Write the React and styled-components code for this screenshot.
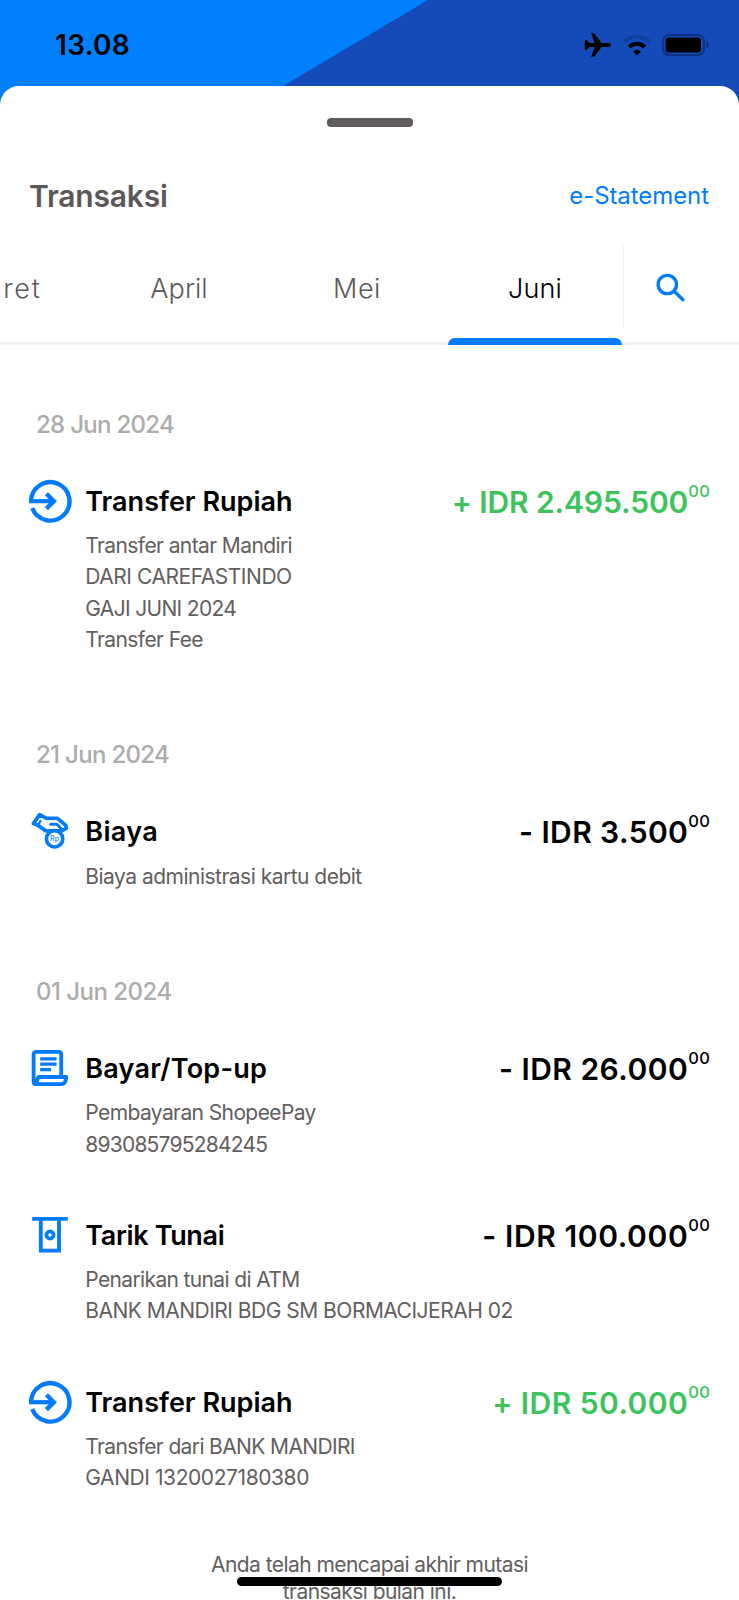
import React, { useState } from 'react'
import styled, { createGlobalStyle } from 'styled-components'


const months = [
    { name: 'Maret', spacing: 1.8 },
    { name: 'April', spacing: 0.07 },
    { name: 'Mei', spacing: 0.5 },
    { name: 'Juni', spacing: 0.1 },
]

const groups = [
    {
        date: '28 Jun 2024',
        spacing: -0.71,
        items: [
            {
                icon: 'transfer',
                title: 'Transfer Rupiah',
                titleSpacing: 0.02,
                lines: [
                    { text: 'Transfer antar Mandiri', spacing: -0.6 },
                    { text: 'DARI CAREFASTINDO', spacing: -0.46 },
                    { text: 'GAJI JUNI 2024', spacing: -0.67 },
                    { text: 'Transfer Fee', spacing: -0.6 },
                ],
                amount: '+ IDR 2.495.500',
                amountSpacing: -0.1,
                income: true,
            },
        ],
    },
    {
        date: '21 Jun 2024',
        spacing: -0.69,
        items: [
            {
                icon: 'fee',
                title: 'Biaya',
                titleSpacing: 0.35,
                lines: [{ text: 'Biaya administrasi kartu debit', spacing: -0.51 }],
                amount: '- IDR 3.500',
                amountSpacing: 0.4,
            },
        ],
    },
    {
        date: '01 Jun 2024',
        spacing: -0.52,
        items: [
            {
                icon: 'bill',
                title: 'Bayar/Top-up',
                titleSpacing: 0.22,
                lines: [
                    { text: 'Pembayaran ShopeePay', spacing: -0.6 },
                    { text: '893085795284245', spacing: -0.78 },
                ],
                amount: '- IDR 26.000',
                amountSpacing: 0.47,
            },
            {
                icon: 'cash',
                title: 'Tarik Tunai',
                titleSpacing: -0.36,
                lines: [
                    { text: 'Penarikan tunai di ATM', spacing: -0.64 },
                    { text: 'BANK MANDIRI BDG SM BORMACIJERAH 02', spacing: -0.51 },
                ],
                amount: '- IDR 100.000',
                amountSpacing: 0.6,
            },
            {
                icon: 'transfer',
                title: 'Transfer Rupiah',
                titleSpacing: 0.02,
                lines: [
                    { text: 'Transfer dari BANK MANDIRI', spacing: -0.63 },
                    { text: 'GANDI 1320027180380', spacing: -0.42 },
                ],
                amount: '+ IDR 50.000',
                amountSpacing: 0.45,
                income: true,
            },
        ],
    },
]

const TransferIcon = () => (
    <svg width="44" height="44" viewBox="0 0 44 44" fill="none" stroke="#007bff">
        <path d="M3.1 22.2A19.2 19.2 0 1 1 4.3 29" strokeWidth="4.4" />
        <path d="M1 22.2H25" strokeWidth="4.2" />
        <path d="M18.4 14.8L25.8 22.2L18.4 29.6" strokeWidth="4.4" />
    </svg>
)

const FeeIcon = () => (
    <svg width="44" height="44" viewBox="0 0 44 44" fill="none" stroke="#007bff" strokeWidth="3.8" strokeLinejoin="round" strokeLinecap="round">
        <path d="M11.6 5.6L5.4 14.6L10.4 16.6L17.6 21.8L34.2 21.6L38.4 19.2L37.8 16.4L29.4 9.4L18 9.2L11.6 5.6Z" />
        <path d="M12.4 12L10.8 15" strokeWidth="2.4" />
        <path d="M22.6 15.2H28.8L34.6 21" strokeWidth="3" />
        <circle cx="26.6" cy="29.8" r="8.2" fill="#fff" strokeWidth="3.6" />
        <text x="26.6" y="32.4" textAnchor="middle" fontFamily="Inter, sans-serif" fontSize="7" fontWeight="700" fill="#4a9fff" stroke="none">Rp</text>
    </svg>
)

const BillIcon = () => (
    <svg width="44" height="44" viewBox="0 0 44 44" fill="none" stroke="#007bff" strokeWidth="3.8" strokeLinejoin="round">
        <path d="M33.2 29.5V8.4Q33.2 5.8 30.6 5.8H8.2Q5.6 5.8 5.6 8.4V35.4Q5.6 38.2 8.4 38.2H33.4Q37.6 38.2 38.4 31H11Q10 31 9.6 33.2L8.6 38" />
        <path d="M12.2 12.8H28.6M12.2 18.2H28.6M12.2 23.6H23" strokeWidth="3.2" />
    </svg>
)

const CashIcon = () => (
    <svg width="44" height="44" viewBox="0 0 44 44" fill="none" stroke="#007bff" strokeWidth="3.8">
        <path d="M4.2 5.8H39.8" />
        <path d="M12.8 5.8V37.6H31V5.8" />
        <circle cx="22" cy="22" r="3.6" strokeWidth="3.6" />
    </svg>
)

const SearchIcon = () => (
    <svg width="32" height="32" viewBox="0 0 32 32" fill="none" stroke="#007bff" strokeWidth="3.3" strokeLinecap="round">
        <circle cx="12.3" cy="12.5" r="9.2" />
        <path d="M19.2 19.3L28 27.8" />
    </svg>
)

const PlaneIcon = () => (
    <svg width="28" height="26" viewBox="0 0 28 26">
        <path d="M27 13C27 11.7 25.6 11 24 11H17.6L10.4 1.8Q9.8 1 8.8 1H7.2L10.6 11H5.2L2.8 8H.8V18H2.8L5.2 15H10.6L7.2 25H8.8Q9.8 25 10.4 24.2L17.6 15H24C25.6 15 27 14.3 27 13Z" />
    </svg>
)

const WifiIcon = () => (
    <svg width="30" height="22" viewBox="0 0 30 22" fill="none" strokeWidth="4">
        <path d="M2.6 7.6A17.6 17.6 0 0 1 27.4 7.6" stroke="#0f3f9f" />
        <path d="M7.2 13A11 11 0 0 1 22.8 13" stroke="#000" />
        <path d="M15 21.6L11 17.4A5.8 5.8 0 0 1 19 17.4Z" fill="#000" />
    </svg>
)

const BatteryIcon = () => (
    <svg width="48" height="22" viewBox="0 0 48 22">
        <rect x="1" y="1" width="41" height="20" rx="6" fill="none" stroke="#0c3283" strokeWidth="2" />
        <rect x="3.6" y="3.4" width="35.4" height="15.2" rx="3.4" />
        <path d="M44.4 7.4Q47.2 8.6 47.2 11T44.4 14.6Z" fill="#0c3283" />
    </svg>
)

const icons = {
    transfer: TransferIcon,
    fee: FeeIcon,
    bill: BillIcon,
    cash: CashIcon,
}


const Transaction = ({ item }) => {
    const Icon = icons[item.icon]

    return (
        <Row>
            <Icon />
            <Detail>
                <Title $spacing={item.titleSpacing}>{item.title}</Title>
                {item.lines.map(({ text, spacing }) => <Line key={text} $spacing={spacing}>{text}</Line>)}
            </Detail>
            <Amount $income={item.income} $spacing={item.amountSpacing}>
                {item.amount}
                <Cents>00</Cents>
            </Amount>
        </Row>
    )
}

const App = () => {
    const [active, setActive] = useState('Juni')

    return (
        <Screen>
            <GlobalStyle />
            <StatusBar>
                <Clock>13.08</Clock>
                <StatusIcons>
                    <PlaneIcon />
                    <WifiIcon />
                    <BatteryIcon />
                </StatusIcons>
            </StatusBar>

            <Sheet>
                <Handle />
                <Header>
                    <h1>Transaksi</h1>
                    <a>e-Statement</a>
                </Header>

                <TabBar>
                    <Tabs>
                        {months.map(({ name, spacing }) => (
                            <Tab key={name} $active={name === active} $spacing={spacing} onClick={() => setActive(name)}>
                                <span>{name}</span>
                            </Tab>
                        ))}
                    </Tabs>
                    <SearchButton aria-label="Cari">
                        <SearchIcon />
                    </SearchButton>
                </TabBar>

                <List>
                    {groups.map((group) => (
                        <Group key={group.date}>
                            <DateLabel $spacing={group.spacing}>{group.date}</DateLabel>
                            {group.items.map((item, i) => <Transaction key={i} item={item} />)}
                        </Group>
                    ))}
                </List>
                <EndNote>
                    Anda telah mencapai akhir mutasi
                    <br />
                    transaksi bulan ini.
                </EndNote>
            </Sheet>
            <HomeIndicator />
        </Screen>
    )
}

const GlobalStyle = createGlobalStyle`
    * {
        box-sizing: border-box;
    }
    body {
        margin: 0;
        overflow: hidden;
        font-family: Inter, "Liberation Sans", sans-serif;
    }
`;

const Screen = styled.div`
    position: relative;
    height: 1600px;
    display: flex;
    flex-direction: column;
    overflow: hidden;
    background: linear-gradient(149.3deg, #007fff 0, #007fff 218px, #144bb9 219px);
`;

const StatusBar = styled.div`
    flex: none;
    height: 86px;
    display: flex;
    justify-content: space-between;
    align-items: center;
    padding: 3px 29px 0 55px;
`;

const Clock = styled.div`
    font-size: 28px;
    font-weight: 600;
    letter-spacing: 0.3px;
`;

const StatusIcons = styled.div`
    display: flex;
    align-items: center;
    gap: 10px;
`;

const Sheet = styled.div`
    flex: 1;
    min-height: 0;
    padding-top: 32px;
    background: #fff;
    border-radius: 19px 19px 0 0;
`;

const Handle = styled.div`
    width: 86px;
    height: 9px;
    margin: 0 auto 39px;
    border-radius: 4px;
    background: #605c5c;
`;

const Header = styled.div`
    height: 60px;
    display: flex;
    justify-content: space-between;
    align-items: center;
    padding: 0 30px 0 29px;
    h1{
        margin: 0;
        font-size: 30px;
        font-weight: 600;
        letter-spacing: -0.2px;
        color: #5d5858;
    }
    a{
        margin-bottom: 2px;
        font-size: 24px;
        letter-spacing: -0.07px;
        color: #007bff;
        cursor: pointer;
    }
`;

const TabBar = styled.div`
    display: flex;
    align-items: flex-start;
    height: 99px;
    margin-top: 20px;
    background: linear-gradient(#f1f1f1, #f1f1f1) 0 95.5px / 100% 3px no-repeat;
`;

const Tabs = styled.div`
    flex: none;
    width: 623px;
    height: 99px;
    display: flex;
    justify-content: flex-end;
    overflow: hidden;
`;

const Tab = styled.button`
    flex: none;
    width: 178px;
    padding: 0 1px 0 3px;
    border: none;
    background: none;
    display: flex;
    flex-direction: column;
    justify-content: space-between;
    font-family: inherit;
    font-size: 27px;
    font-weight: 350;
    letter-spacing: ${({ $spacing }) => $spacing}px;
    color: ${({ $active }) => ($active ? '#000' : '#5d5858')};
    cursor: pointer;
    span{
        align-self: center;
        line-height: 86px;
    }
    &::after{
        content: "";
        align-self: stretch;
        height: 7px;
        border-radius: 7px 7px 0 0;
        background: ${({ $active }) => ($active ? '#007bff' : 'transparent')};
    }
`;

const SearchButton = styled.button`
    flex: 1;
    height: 82px;
    padding: 1px 0 0 31px;
    border: none;
    border-left: 1px solid #ececec;
    background: none;
    display: flex;
    align-items: center;
    cursor: pointer;
`;

const List = styled.div`
    display: flex;
    flex-direction: column;
    gap: 84.4px;
    padding: 64px 29px 0 28px;
`;

const Group = styled.section`
    display: flex;
    flex-direction: column;
    gap: 56.2px;
`;

const DateLabel = styled.div`
    margin: 0 0 -15.2px 8px;
    font-size: 24px;
    font-weight: 500;
    line-height: 32px;
    letter-spacing: ${({ $spacing }) => $spacing}px;
    color: #acacac;
`;

const Row = styled.div`
    display: flex;
    align-items: flex-start;
    svg{
        flex: none;
        margin-top: -3px;
    }
`;

const Detail = styled.div`
    flex: 1;
    min-width: 0;
    margin-left: 13.3px;
    white-space: nowrap;
`;

const Title = styled.div`
    margin-bottom: 8.2px;
    font-size: 27px;
    font-weight: 600;
    line-height: 40px;
    letter-spacing: ${({ $spacing }) => $spacing}px;
`;

const Line = styled.div`
    font-size: 21px;
    line-height: 31.2px;
    letter-spacing: ${({ $spacing }) => $spacing}px;
    color: #625e5e;
`;

const Amount = styled.div`
    display: flex;
    font-size: 30px;
    font-weight: 600;
    line-height: 40px;
    letter-spacing: ${({ $spacing }) => $spacing}px;
    white-space: nowrap;
    color: ${({ $income }) => ($income ? '#3cc35c' : '#000')};
`;

const Cents = styled.span`
    font-size: 16.5px;
    font-weight: 500;
    line-height: 18px;
    letter-spacing: 0.2px;
`;

const EndNote = styled.p`
    margin: 58px 0 0;
    text-align: center;
    font-size: 21px;
    line-height: 27px;
    letter-spacing: -0.56px;
    color: #625e5e;
`;

const HomeIndicator = styled.div`
    position: absolute;
    left: 237px;
    bottom: 14px;
    width: 265px;
    height: 9px;
    border-radius: 5px;
    background: #000;
`;

export default App
